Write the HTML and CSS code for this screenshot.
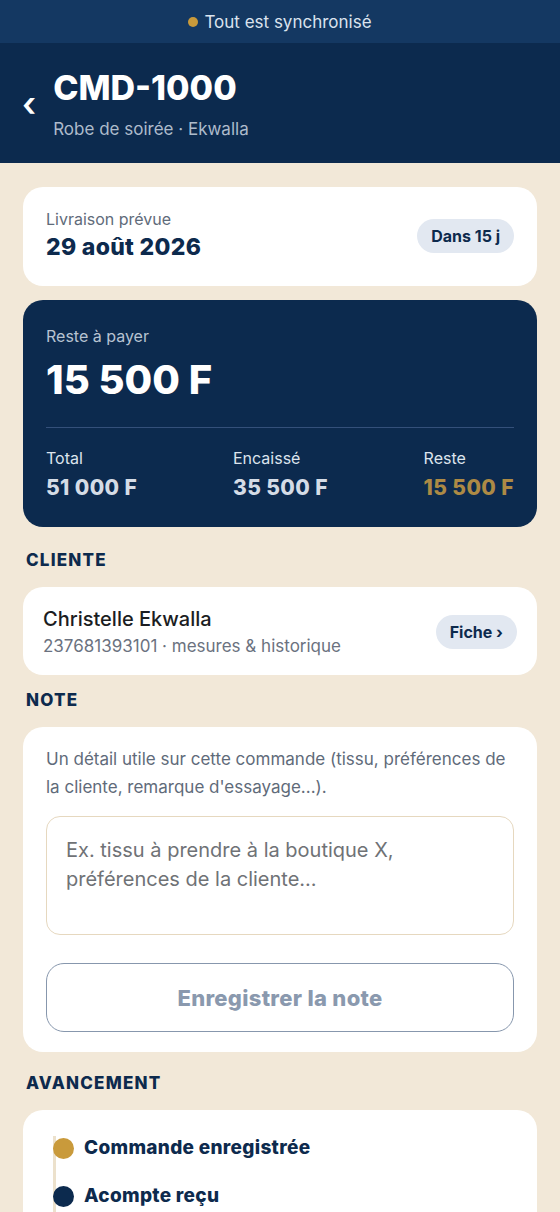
FILE: index.html
```html
<!DOCTYPE html>
<html lang="fr">

<head>
    <meta charset="UTF-8">
    <meta name="viewport" content="width=device-width, initial-scale=1.0">
    <title>CMD-1000</title>
    <link rel="stylesheet" href="styles.css">
</head>

<body>
    <div class="sync"><span class="sync_dot"></span>Tout est synchronisé</div>

    <header class="top">
        <a href="#" class="back">&#8249;</a>
        <div class="top_txt">
            <h1>CMD-1000</h1>
            <p>Robe de soirée · Ekwalla</p>
        </div>
    </header>

    <main class="page">
        <div class="card row">
            <div>
                <div class="muted">Livraison prévue</div>
                <div class="date">29 août 2026</div>
            </div>
            <span class="pill">Dans 15 j</span>
        </div>

        <div class="card dark">
            <div class="dark_lbl">Reste à payer</div>
            <div class="big">15 500 F</div>
            <div class="split">
                <div>
                    <div class="dark_lbl">Total</div>
                    <div class="val">51 000 F</div>
                </div>
                <div>
                    <div class="dark_lbl">Encaissé</div>
                    <div class="val">35 500 F</div>
                </div>
                <div>
                    <div class="dark_lbl">Reste</div>
                    <div class="val gold">15 500 F</div>
                </div>
            </div>
        </div>

        <h2 class="sect">CLIENTE</h2>
        <div class="card row client">
            <div>
                <div class="name">Christelle Ekwalla</div>
                <div class="sub">237681393101 · mesures &amp; historique</div>
            </div>
            <a href="#" class="pill">Fiche ›</a>
        </div>

        <h2 class="sect sect_note">NOTE</h2>
        <div class="card note">
            <p class="hint">Un détail utile sur cette commande (tissu, préférences de la cliente, remarque d'essayage...).</p>
            <textarea class="area" placeholder="Ex. tissu à prendre à la boutique X, préférences de la cliente..."></textarea>
            <button class="btn">Enregistrer la note</button>
        </div>

        <h2 class="sect sect_steps">AVANCEMENT</h2>
        <div class="card steps">
            <ul>
                <li><span class="dot done"></span>Commande enregistrée</li>
                <li><span class="dot"></span>Acompte reçu</li>
                <li><span class="dot"></span>Tissu acheté</li>
            </ul>
        </div>
    </main>
</body>

</html>
```

FILE: styles.css
```css
* {
    margin: 0;
    padding: 0;
    box-sizing: border-box;
}

body {
    background-color: #f2e8d8;
    font-family: Inter, "Liberation Sans", sans-serif;
    color: #0d2a4d;
}

a {
    text-decoration: none;
    color: inherit;
}

.sync {
    height: 43px;
    background-color: #143862;
    color: #dbe3ee;
    font-size: 17px;
    display: flex;
    align-items: center;
    justify-content: center;
    gap: 6px;
}

.sync_dot {
    width: 10px;
    height: 10px;
    border-radius: 50%;
    background-color: #c99a3b;
}

.top {
    height: 120px;
    background-color: #0c2a4e;
    display: flex;
    align-items: center;
    padding: 0 0 0 22px;
    gap: 17px;
}

.back {
    color: #fff;
    font-size: 34px;
    font-weight: 600;
    line-height: 1;
    margin-top: 2px;
}

.top h1 {
    font-size: 34px;
    font-weight: 800;
    color: #fff;
    line-height: 40px;
}

.top p {
    font-size: 17px;
    color: #aebbcb;
    margin-top: 11px;
}

.page {
    padding: 24px 23px 40px;
}

.card {
    background-color: #fff;
    border-radius: 20px;
}

.row {
    display: flex;
    justify-content: space-between;
    align-items: center;
    padding: 22px 23px 24px;
}

.muted {
    font-size: 16px;
    line-height: 20px;
    color: #5f6b7a;
}

.date {
    font-size: 23px;
    font-weight: 800;
    letter-spacing: 0.3px;
    line-height: 29px;
    margin-top: 4px;
}

.pill {
    background-color: #e2e8f1;
    border-radius: 17px;
    font-size: 16px;
    font-weight: 700;
    padding: 7px 14px;
    color: #0d2a4d;
}

.dark {
    background-color: #0c2a4e;
    margin-top: 14px;
    padding: 26px 23px 26px;
}

.dark_lbl {
    font-size: 16px;
    line-height: 20px;
    color: #b7c3d2;
}

.big {
    font-size: 40px;
    font-weight: 800;
    color: #fff;
    line-height: 48px;
    margin-top: 10px;
}

.split {
    display: flex;
    justify-content: space-between;
    border-top: 1px solid #34507a;
    margin-top: 23px;
    padding-top: 20px;
}

.split .dark_lbl {
    color: #dde4ed;
}

.val {
    font-size: 21px;
    font-weight: 800;
    letter-spacing: 0.4px;
    line-height: 26px;
    margin-top: 7px;
    color: #d5dce6;
}

.val.gold {
    color: #ad8a45;
}

.sect {
    font-size: 17px;
    font-weight: 800;
    letter-spacing: 1.2px;
    line-height: 20px;
    margin: 23px 3px 17px;
}

.sect_note {
    margin-top: 15px;
}

.sect_steps {
    margin-top: 21px;
}

.client {
    padding: 20px 20px 18px;
}

.name {
    font-size: 20px;
    font-weight: 500;
    color: #1b1d22;
    line-height: 24px;
}

.sub {
    font-size: 17px;
    color: #6b7280;
    line-height: 22px;
    margin-top: 4px;
}

.note {
    padding: 18px 23px 20px;
}

.hint {
    font-size: 17px;
    line-height: 28px;
    color: #5f6b7a;
}

.area {
    display: block;
    width: 100%;
    height: 119px;
    margin-top: 15px;
    border: 1px solid #e6d8bf;
    border-radius: 14px;
    padding: 19px 19px;
    font-family: Inter, "Liberation Sans", sans-serif;
    font-size: 20px;
    line-height: 29px;
    color: #333;
    resize: none;
}

.area::placeholder {
    color: #6f7276;
}

.btn {
    display: block;
    width: 100%;
    height: 69px;
    margin-top: 28px;
    background-color: #fff;
    border: 1.5px solid #8797ad;
    border-radius: 18px;
    font-family: Inter, "Liberation Sans", sans-serif;
    font-size: 22px;
    font-weight: 800;
    letter-spacing: 0.3px;
    color: #8a99ae;
}

.steps {
    padding: 26px 30px 30px;
}

.steps ul {
    list-style: none;
    border-left: 3px solid #ece1cc;
}

.steps li {
    display: flex;
    align-items: center;
    gap: 10px;
    font-size: 19px;
    font-weight: 800;
    letter-spacing: 0.3px;
    line-height: 24px;
    margin-left: -3px;
    margin-bottom: 24px;
}

.dot {
    width: 21px;
    height: 21px;
    border-radius: 50%;
    background-color: #0c2a4e;
}

.dot.done {
    background-color: #c99a3b;
}
```
